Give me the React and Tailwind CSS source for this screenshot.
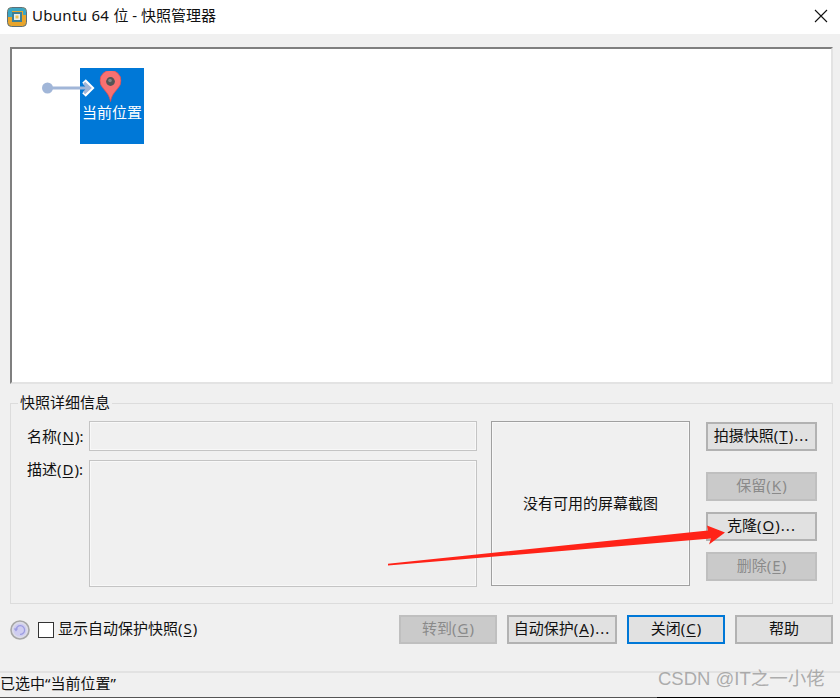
const font = { fontFamily: '"Noto Sans","Noto Sans CJK SC",sans-serif' };

function U({ children }) {
  return <span className="underline underline-offset-2 mx-[1px]">{children}</span>;
}

function Btn({ children, w = "w-[111px]", disabled, focus }) {
  return (
    <div
      className={`${w} h-[29px] pb-[2px] flex items-center justify-center text-[15px] leading-none whitespace-nowrap border-2 ${
        disabled
          ? "bg-[#cacaca] border-[#bfbfbf] text-[#8a8a8a]"
          : focus
          ? "bg-[#e1e1e1] border-[#0078d7] text-[#111]"
          : "bg-[#e1e1e1] border-[#b2b2b2] text-[#111]"
      }`}
    >
      {children}
    </div>
  );
}

function Dots() {
  return <span className="tracking-[1px] ml-[1px]">...</span>;
}

function VMIcon() {
  return (
    <svg width="20" height="20" viewBox="0 0 20 20">
      <rect x="0.5" y="0.5" width="19" height="19" rx="4" fill="#e8a52c" stroke="#5c6f78" />
      <path d="M1 10V4.5A3.5 3.5 0 0 1 4.5 1H15.5A3.5 3.5 0 0 1 19 4.5V8H16V4H5V10Z" fill="#3ba6c4" />
      <rect x="5" y="5" width="10" height="10" fill="#3e7f96" />
      <rect x="7" y="7" width="6" height="6" fill="#e7eef0" />
      <rect x="8.5" y="8.5" width="3" height="3" fill="#f3c04f" />
    </svg>
  );
}

function Pin() {
  return (
    <svg className="-translate-x-[1.5px]" width="22" height="31" viewBox="0 0 22 31">
      <path d="M11 30.5C9.8 24 7 21.5 3.6 17.2A10.5 10.5 0 1 1 18.4 17.2C15 21.5 12.2 24 11 30.5Z" fill="#f87171" stroke="#e25050" strokeWidth="0.8" />
      <circle cx="11" cy="10.5" r="4.4" fill="#555" />
      <circle cx="10.5" cy="9.5" r="1.8" fill="#858585" />
    </svg>
  );
}

function RestoreIcon() {
  return (
    <svg width="20" height="20" viewBox="0 0 20 20">
      <circle cx="10" cy="10" r="9" fill="#dcdce8" stroke="#a6a6a6" strokeWidth="1.6" />
      <circle cx="10" cy="10" r="6.6" fill="#cfcdf0" />
      <path d="M6 10A4.3 4.3 0 1 1 10 14.3" fill="none" stroke="#9c9ce0" strokeWidth="1.3" />
      <path d="M3.6 8.6H8.2L6 11.6Z" fill="#9c9ce0" />
    </svg>
  );
}

export default function App() {
  return (
    <div className="w-[840px] h-[698px] bg-[#f0f0f0] relative overflow-hidden flex flex-col text-[#111]" style={font}>
      {/* Title bar */}
      <div className="h-[34px] bg-white flex items-center pl-[7px] pr-[12px] shrink-0">
        <VMIcon />
        <span className="ml-[5px] text-[15px] leading-none text-[#111] -translate-y-[2px]">
          <span className="tracking-[0.3px]">Ubuntu 64 </span>位 - 快照管理器
        </span>
        <svg className="ml-auto -translate-y-[1px]" width="14" height="14" viewBox="0 0 14 14">
          <path d="M1 1L13 13M13 1L1 13" stroke="#111" strokeWidth="1.1" />
        </svg>
      </div>

      {/* Canvas */}
      <div className="mt-[13px] mx-[10px] w-[823px] h-[337px] shrink-0 bg-white border-2 border-t-[#7f7f7f] border-l-[#7f7f7f] border-r-[#e3e3e3] border-b-[#e3e3e3] relative">
        <div className="absolute left-[68px] top-[19px] w-[64px] h-[76px] bg-[#0078d7] flex flex-col items-center pt-[3px]">
          <Pin />
          <span className="text-[15px] leading-none text-white mt-[3px] whitespace-nowrap">当前位置</span>
        </div>
        <svg className="absolute left-[25px] top-[29px]" width="58" height="20" viewBox="0 0 58 20">
          <path d="M47 3L54 10L47 17" fill="none" stroke="#fff" strokeWidth="5" />
          <path d="M11 10H52M47 5L52.5 10L47 15" fill="none" stroke="#a1b6d8" strokeWidth="3.2" />
          <circle cx="10.5" cy="10" r="5.5" fill="#a1b6d8" />
        </svg>
      </div>

      {/* Group box */}
      <div className="mt-[19px] mx-[10px] w-[823px] h-[201px] shrink-0 border border-[#dcdcdc] relative flex pt-[17px] pl-[16px]">
        <span className="absolute left-[7px] -top-[11px] px-[2px] bg-[#f0f0f0] text-[15px] leading-[18px] text-[#111]">快照详细信息</span>

        <div className="w-[452px] shrink-0 flex flex-col">
          <div className="flex items-start">
            <span className="w-[62px] text-[15px] leading-[30px] whitespace-nowrap">名称(<U>N</U>):</span>
            <div className="w-[388px] h-[30px] border border-[#c4c4c4] shadow-[inset_0_0_0_1px_#f8f8f8] bg-[#f0f0f0]" />
          </div>
          <div className="flex items-start mt-[9px]">
            <span className="w-[62px] text-[15px] leading-[18px] whitespace-nowrap">描述(<U>D</U>):</span>
            <div className="w-[388px] h-[127px] border border-[#c4c4c4] shadow-[inset_0_0_0_1px_#f8f8f8] bg-[#f0f0f0]" />
          </div>
        </div>

        <div className="ml-[12px] w-[199px] h-[165px] shrink-0 border border-[#a0a0a0] shadow-[inset_0_0_0_1px_#f8f8f8] flex items-center justify-center text-[15px] leading-none">
          没有可用的屏幕截图
        </div>

        <div className="ml-[16px] flex flex-col pt-[1px]">
          <Btn>拍摄快照(<U>T</U>)<Dots /></Btn>
          <div className="h-[21px]" />
          <Btn disabled>保留(<U>K</U>)</Btn>
          <div className="h-[11px]" />
          <Btn>克隆(<U>O</U>)<Dots /></Btn>
          <div className="h-[11px]" />
          <Btn disabled>删除(<U>E</U>)</Btn>
        </div>
      </div>

      {/* Bottom row */}
      <div className="mt-[11px] mx-[10px] w-[823px] h-[29px] shrink-0 flex items-center">
        <RestoreIcon />
        <div className="ml-[8px] w-[16px] h-[16px] bg-white border border-[#333]" />
        <span className="ml-[4px] text-[15px] leading-none whitespace-nowrap -translate-y-[1px]">显示自动保护快照(<U>S</U>)</span>
        <div className="ml-auto flex gap-[10px]">
          <Btn w="w-[98px]" disabled>转到(<U>G</U>)</Btn>
          <Btn w="w-[110px]">自动保护(<U>A</U>)<Dots /></Btn>
          <Btn w="w-[98px]" focus>关闭(<U>C</U>)</Btn>
          <Btn w="w-[98px]">帮助</Btn>
        </div>
      </div>

      {/* Status bar */}
      <div className="mt-[27px] flex-1 border-t-2 border-[#e2e2e2] flex items-start pt-[1px]">
        <span className="text-[15px] leading-[18px] whitespace-nowrap">已选中“当前位置”</span>
      </div>
      <div className="h-[1px] shrink-0 flex">
        <div className="w-[657px] bg-[#555]" />
        <div className="flex-1 bg-black" />
      </div>

      {/* Annotation arrow */}
      <svg className="absolute left-[380px] top-[515px] pointer-events-none" width="350" height="60" viewBox="0 0 350 60">
        <path d="M8 48.8L328 15.5L327 10.5L345 17.5L329 29.5L331 23.5L8 50.5Z" fill="#ff2318" />
      </svg>

      {/* Watermark */}
      <span className="absolute left-[658px] top-[668px] text-[18.5px] leading-[22px] text-[#9a9a9a]/80 whitespace-nowrap" style={{ fontFamily: '"Liberation Sans","Noto Sans CJK SC",sans-serif' }}>
        CSDN @IT之一小佬
      </span>
    </div>
  );
}
